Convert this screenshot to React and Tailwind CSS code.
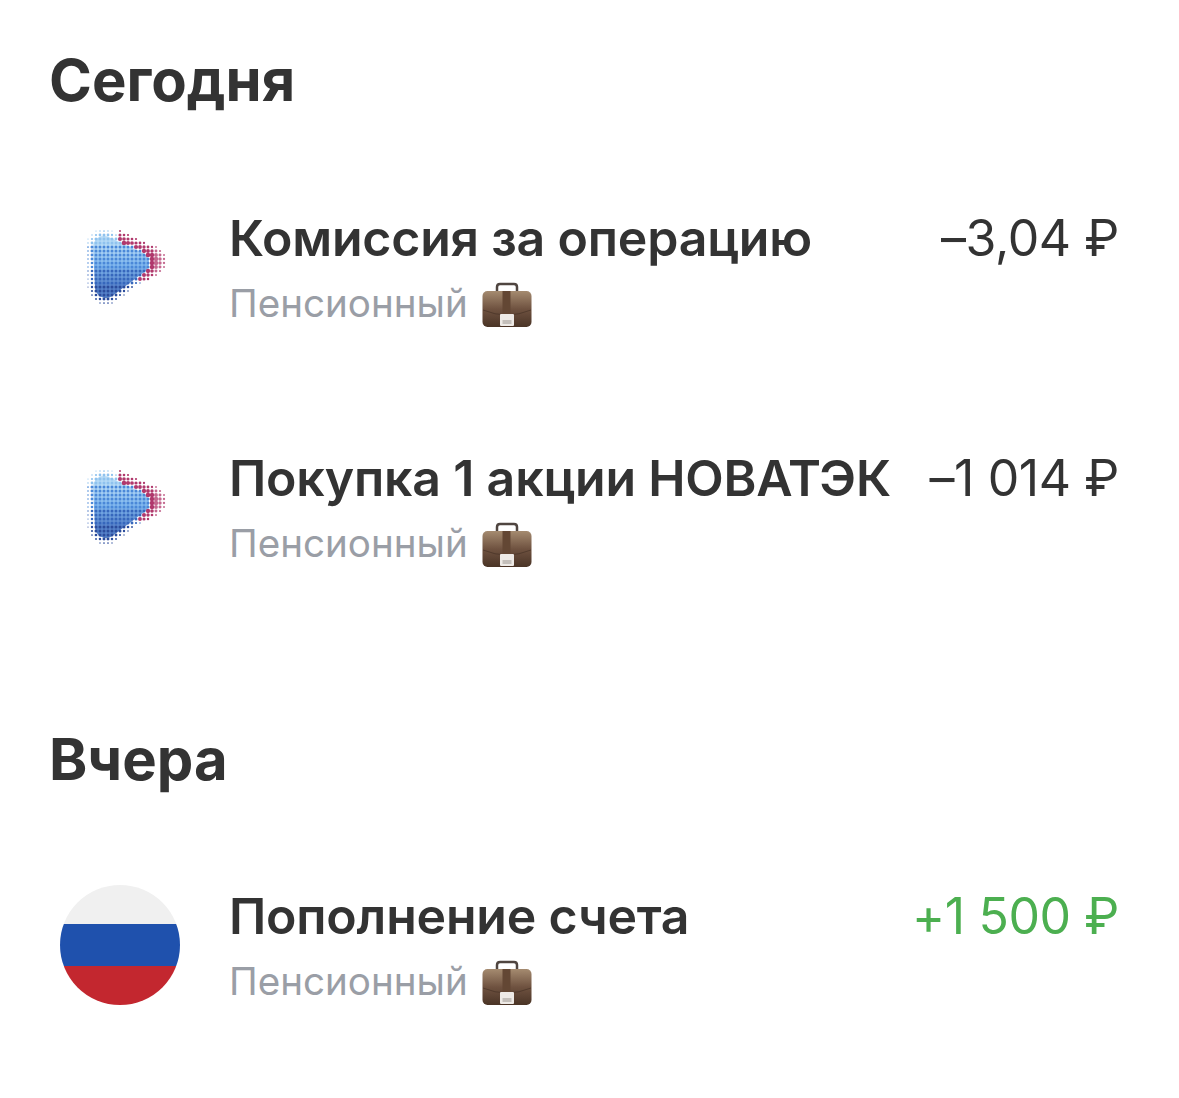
const font = { fontFamily: "Inter, 'Noto Sans', sans-serif" };

// rounded triangle distance, negative inside. Coordinates are the 120x120 icon box
const triPts = [[44, 42], [78, 58], [46, 82]];
const triRadius = 12;

const segDist = (px, py, [ax, ay], [bx, by]) => {
  const dx = bx - ax;
  const dy = by - ay;
  const t = Math.max(0, Math.min(1, ((px - ax) * dx + (py - ay) * dy) / (dx * dx + dy * dy)));
  return Math.hypot(px - ax - t * dx, py - ay - t * dy);
};

const triDist = (px, py) => {
  let inside = true;
  let min = Infinity;
  for (let i = 0; i < 3; i++) {
    const a = triPts[i];
    const b = triPts[(i + 1) % 3];
    min = Math.min(min, segDist(px, py, a, b));
    if ((b[0] - a[0]) * (py - a[1]) - (b[1] - a[1]) * (px - a[0]) < 0) inside = false;
  }
  return (inside ? -min : min) - triRadius;
};

const dotColor = (y) => {
  if (y < 40) return "#8fc2ee";
  if (y < 66) return "#4a88d8";
  if (y < 82) return "#3667bc";
  return "#2b4c9c";
};

const HalftoneLogo = () => {
  const dots = [];
  for (let x = 24; x <= 106; x += 4) {
    for (let y = 22; y <= 104; y += 4) {
      const d = triDist(x, y);
      const key = `${x}-${y}`;
      const pink = triDist(x - 13, y + 2);
      if (d > 0 && pink < 3 && x > 58 && y < 76) {
        const r = Math.max(0.7, 2.3 - Math.max(0, pink + 7) * 0.14);
        dots.push(<circle key={key} cx={x} cy={y} r={r} fill={x > 94 ? "#c4688f" : "#b0386c"} />);
      } else if (d < 6) {
        const r = d < 0 ? 1.5 : Math.max(0.6, 1.5 - d * 0.16);
        dots.push(<circle key={key} cx={x} cy={y} r={r} fill={dotColor(y)} />);
      }
    }
  }
  return (
    <svg width="120" height="120" viewBox="0 0 120 120" className="shrink-0 blur-[0.4px]">
      <defs>
        <linearGradient id="logoFill" x1="0" y1="0" x2="0" y2="1">
          <stop offset="0" stopColor="#b5daf6" />
          <stop offset="0.45" stopColor="#80b8ee" />
          <stop offset="1" stopColor="#5580c8" />
        </linearGradient>
      </defs>
      <path
        d="M44 42 L78 58 L46 82 Z"
        fill="url(#logoFill)"
        stroke="url(#logoFill)"
        strokeWidth="22"
        strokeLinejoin="round"
      />
      {dots}
    </svg>
  );
};

const RussiaFlag = () => (
  <div className="w-[120px] h-[120px] mt-0.5 rounded-full overflow-hidden flex flex-col shrink-0">
    <div className="h-[39px] bg-[#f0f0f0]" />
    <div className="h-[42px] bg-[#1f51ad]" />
    <div className="h-[39px] bg-[#c3272f]" />
  </div>
);

const Briefcase = () => (
  <svg width="50" height="46" viewBox="0 0 50 46" className="shrink-0 mt-[2px] blur-[0.4px]">
    <defs>
      <linearGradient id="caseBody" x1="0" y1="0" x2="0" y2="1">
        <stop offset="0" stopColor="#a58b70" />
        <stop offset="0.5" stopColor="#6f5240" />
        <stop offset="1" stopColor="#4a3426" />
      </linearGradient>
    </defs>
    <path d="M15 10 V5 Q15 2 18 2 H32 Q35 2 35 5 V10" fill="none" stroke="#4f4540" strokeWidth="2.5" />
    <rect x="0.5" y="9" width="49" height="36" rx="5" fill="url(#caseBody)" />
    <path d="M1 28 Q25 38 49 28" fill="none" stroke="#3a281d" strokeWidth="1" opacity="0.5" />
    <rect x="20.5" y="9" width="8" height="26" fill="#634734" />
    <rect x="18" y="32" width="14" height="12" rx="1" fill="#eeeae6" />
    <rect x="20.5" y="38" width="9" height="4" fill="#c4bfba" />
  </svg>
);

const Row = ({ icon, title, amount, green, className = "" }) => (
  <div className={`flex h-[132px] pl-[11px] ${className}`}>
    {icon}
    <div className="ml-[49px] flex-1 min-w-0">
      <div className="flex justify-between">
        <span className="text-[50px] leading-[66px] font-semibold tracking-[-0.2px] text-[#333333] whitespace-nowrap">{title}</span>
        <span className={`text-[50px] leading-[66px] font-normal tracking-[-0.4px] whitespace-nowrap ${green ? "text-[#4caf50]" : "text-[#333333]"}`}>
          {amount}
        </span>
      </div>
      <div className="flex items-center gap-[14px] h-[66px]">
        <span className="text-[38.6px] text-[#9a9ea6] whitespace-nowrap">Пенсионный</span>
        <Briefcase />
      </div>
    </div>
  </div>
);

export default function App() {
  return (
    <div className="w-[1179px] h-[1098px] bg-white pt-[45px] pl-[49px] pr-[60px] overflow-hidden" style={font}>
      <h2 className="h-[70px] text-[58px] leading-[70px] font-bold text-[#333333]">Сегодня</h2>
      <Row className="mt-[90px]" icon={<HalftoneLogo />} title="Комиссия за операцию" amount="–3,04 ₽" />
      <Row className="mt-[108px]" icon={<HalftoneLogo />} title="Покупка 1 акции НОВАТЭК" amount="–1 014 ₽" />
      <h2 className="mt-[147px] h-[70px] text-[58px] leading-[70px] font-bold text-[#333333]">Вчера</h2>
      <Row className="mt-[89px]" icon={<RussiaFlag />} title="Пополнение счета" amount="+1 500 ₽" green />
    </div>
  );
}
